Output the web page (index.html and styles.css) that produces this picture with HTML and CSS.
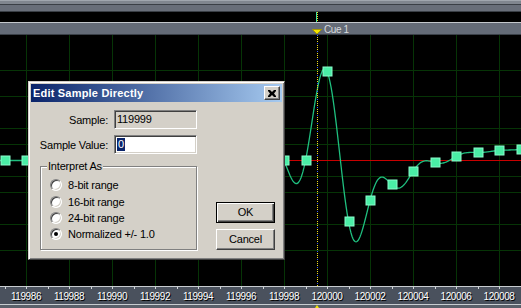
FILE: index.html
```html
<!DOCTYPE html>
<html lang="en">
<head>
    <meta charset="UTF-8">
    <meta name="viewport" content="width=device-width, initial-scale=1.0">
    <title>Edit Sample Directly</title>
    <link rel="stylesheet" href="styles.css">
</head>
<body>

<div class="editor">
    <div class="topbar"></div>
    <div class="overview">
        <div class="playhead"></div>
    </div>
    <div class="cuebar">
        <div class="cue">
            <svg class="cue-flag" width="10" height="6" viewBox="0 0 10 6">
                <polygon points="0.5,0.5 9.5,0.5 5,5" />
            </svg>
            <span class="cue-name">Cue 1</span>
        </div>
    </div>
    <div class="wave">
        <svg id="wave" width="521" height="251" viewBox="0 0 521 251"></svg>
    </div>
    <div class="ruler">
        <span>119986</span>
        <span>119988</span>
        <span>119990</span>
        <span>119992</span>
        <span>119994</span>
        <span>119996</span>
        <span>119998</span>
        <span>120000</span>
        <span>120002</span>
        <span>120004</span>
        <span>120006</span>
        <span>120008</span>
    </div>
    <div class="footer">
        <div class="cursor-mark"></div>
    </div>
</div>

<div class="dialog">
    <div class="titlebar">
        <span>Edit Sample Directly</span>
        <button class="close">
            <svg width="8" height="7" viewBox="0 0 8 7">
                <path d="M0 0h2l2 2 2-2h2v1l-2 2.5 2 2.5v1h-2l-2-2-2 2h-2v-1l2-2.5-2-2.5z" />
            </svg>
        </button>
    </div>
    <div class="dlg-body">
        <div class="left">
            <div class="row">
                <label>Sample:</label>
                <div class="field readonly">119999</div>
            </div>
            <div class="row">
                <label>Sample Value:</label>
                <div class="field"><span class="selected">0</span></div>
            </div>
            <fieldset class="group">
                <legend>Interpret As</legend>
                <div class="option"><span class="radio"></span>8-bit range</div>
                <div class="option"><span class="radio"></span>16-bit range</div>
                <div class="option"><span class="radio"></span>24-bit range</div>
                <div class="option"><span class="radio checked"></span>Normalized +/- 1.0</div>
            </fieldset>
        </div>
        <div class="actions">
            <button class="btn default">OK</button>
            <button class="btn">Cancel</button>
        </div>
    </div>
</div>

<script>
    const svg = document.getElementById('wave');
    const NS = 'http://www.w3.org/2000/svg';
    const MID = 125;     // zero line
    const STEP = 21.5;   // pixels per sample
    const X0 = 327;      // sample 120000

    function add(tag, attrs) {
        const el = document.createElementNS(NS, tag);
        for (const k in attrs) el.setAttribute(k, attrs[k]);
        svg.appendChild(el);
        return el;
    }

    // grid
    for (let i = 0; i < 12; i++) {
        const x = 26.5 + 43 * i;
        add('line', { x1: x, y1: 0, x2: x, y2: 251, class: 'grid' });
    }
    [-90, -64, -32, -16, 16, 32, 64, 90].forEach(function (d) {
        const y = MID + d + 0.5;
        add('line', { x1: 0, y1: y, x2: 521, y2: y, class: 'grid' });
    });
    add('line', { x1: 0, y1: MID + 0.5, x2: 521, y2: MID + 0.5, class: 'zero' });

    // sample values, up is positive
    const samples = { 0: 89, 1: -61, 2: -40, 3: -24, 4: -11, 5: -2, 6: 4, 7: 8, 8: 10, 9: 11 };

    function sample(k) {
        if (k < 0) return 0;
        if (k in samples) return samples[k];
        return 12;
    }

    function lanczos(x, a) {
        if (x === 0) return 1;
        if (Math.abs(x) >= a) return 0;
        const px = Math.PI * x;
        return a * Math.sin(px) * Math.sin(px / a) / (px * px);
    }

    function level(t) {
        let s = 0;
        const k0 = Math.floor(t);
        for (let k = k0 - 7; k <= k0 + 8; k++) s += sample(k) * lanczos(t - k, 8);
        return s;
    }

    let pts = [];
    for (let x = 0; x <= 521; x++) {
        const y = MID + 0.5 - level((x - X0) / STEP);
        pts.push(x + ',' + y.toFixed(2));
    }
    add('polyline', { points: pts.join(' '), class: 'curve' });

    // cue / cursor line
    add('line', { x1: 317.5, y1: 0, x2: 317.5, y2: 251, class: 'cue-line' });
    add('line', { x1: 317.5, y1: 0, x2: 317.5, y2: 251, class: 'cue-line blue' });

    for (let k = -15; k <= 9; k++) {
        const x = Math.round(X0 + STEP * k);
        const y = MID - sample(k);
        add('rect', { x: x - 4, y: y - 4, width: 9, height: 9, class: 'dot' });
    }
</script>

</body>
</html>
```

FILE: styles.css
```css
body {
    margin: 0;
    padding: 0;
    width: 521px;
    height: 308px;
    overflow: hidden;
    position: relative;
    background-color: #000;
    font-family: "Liberation Sans", Arial, sans-serif;
    font-size: 11px;
}

.topbar {
    height: 12px;
    background: linear-gradient(#a0a6ae 0 1px, #80868f 1px 4px, #3a3f46 4px 5px, #686e79 5px 11px, #3a3f46 11px 12px);
}

.overview {
    height: 10px;
    position: relative;
}

.playhead {
    position: absolute;
    left: 316px;
    top: 0;
    width: 1px;
    height: 10px;
    background-color: #3fe0a0;
}

.playhead::after {
    content: "";
    position: absolute;
    left: 1px;
    top: 0;
    width: 1px;
    height: 10px;
    background: repeating-linear-gradient(#f0e020 0 1px, transparent 1px 2px);
}

.cuebar {
    height: 11px;
    border-top: 1px solid #c4c8cc;
    border-bottom: 1px solid #3a4048;
    background-color: #646b77;
    position: relative;
}

.cue {
    position: absolute;
    left: 312px;
    top: 0;
    display: flex;
    align-items: flex-start;
}

.cue-flag {
    display: block;
    margin-top: 6px;
}

.cue-flag polygon {
    fill: #f4e400;
    stroke: #a89a00;
    stroke-width: 1;
}

.cue-name {
    color: #d6dade;
    font-size: 10px;
    letter-spacing: -0.4px;
    line-height: 11px;
    margin-top: 1px;
    margin-left: 2px;
}

.wave {
    height: 251px;
}

.wave svg {
    display: block;
}

.grid {
    stroke: #063406;
    stroke-width: 1;
}

.zero {
    stroke: #c80000;
    stroke-width: 1;
}

.curve {
    fill: none;
    stroke: #1fbf7f;
    stroke-width: 1.3;
}

.cue-line {
    stroke: #f0e020;
    stroke-width: 1;
    stroke-dasharray: 1 1;
}

.cue-line.blue {
    stroke: #4060ff;
    stroke-dasharray: 1 7;
}

.dot {
    fill: #4aeea6;
    stroke: #8cfccc;
    stroke-width: 1;
}

.ruler {
    height: 17px;
    display: flex;
    padding-left: 4.5px;
    border-top: 1px solid #c8ccd0;
    border-bottom: 1px solid #c8ccd0;
    background-color: #4a515d;
    background-image: linear-gradient(to right, #d0d4d8 0 1px, transparent 1px 21px, #d0d4d8 21px 22px, transparent 22px);
    background-size: 43px 2px;
    background-position: 5px 0;
    background-repeat: repeat-x;
}

.ruler span {
    flex: 0 0 43px;
    text-align: center;
    color: #fff;
    font-size: 10px;
    letter-spacing: -0.4px;
    line-height: 10px;
    padding-top: 5px;
    text-shadow: 1px 1px 0 #000;
}

.footer {
    height: 3px;
    background-color: #5a606a;
    position: relative;
}

.cursor-mark {
    position: absolute;
    left: 315px;
    top: 0;
    width: 0;
    height: 0;
    border-left: 2.5px solid transparent;
    border-right: 2.5px solid transparent;
    border-bottom: 3px solid #f4e400;
}

/* dialog */

.dialog {
    position: absolute;
    left: 28px;
    top: 81px;
    width: 257px;
    height: 179px;
    box-sizing: border-box;
    padding: 2px;
    background-color: #d4d0c8;
    border: 1px solid;
    border-color: #d4d0c8 #404040 #404040 #d4d0c8;
    box-shadow: inset 1px 1px 0 #fff, inset -1px -1px 0 #808080;
    color: #000;
    letter-spacing: -0.2px;
}

.titlebar {
    height: 18px;
    display: flex;
    align-items: center;
    justify-content: space-between;
    padding: 0 2px;
    background: linear-gradient(to right, #0a246a, #a6caf0);
    color: #fff;
    font-weight: bold;
    letter-spacing: 0.2px;
}

.close {
    width: 16px;
    height: 14px;
    padding: 0;
    display: flex;
    align-items: center;
    justify-content: center;
    background-color: #d4d0c8;
    border: 1px solid;
    border-color: #fff #404040 #404040 #fff;
    box-shadow: inset -1px -1px 0 #808080;
}

.close svg {
    display: block;
}

.close path {
    fill: #000;
}

.dlg-body {
    display: flex;
    align-items: flex-end;
    padding-top: 8px;
}

.left {
    width: 166px;
}

.row {
    display: flex;
    align-items: center;
    gap: 6px;
    margin-bottom: 6px;
}

.row label {
    width: 77px;
    text-align: right;
}

.field {
    width: 83px;
    height: 19px;
    box-sizing: border-box;
    padding: 0 2px;
    line-height: 17px;
    background-color: #fff;
    border: 1px solid;
    border-color: #808080 #fff #fff #808080;
    box-shadow: inset 1px 1px 0 #404040, inset -1px -1px 0 #d4d0c8;
}

.field.readonly {
    background-color: #d4d0c8;
}

.selected {
    display: inline-block;
    padding: 0 1px;
    line-height: 13px;
    background-color: #0a246a;
    color: #fff;
}

.group {
    margin: 4px 0 0 9px;
    padding: 4px 0 6px 9px;
    width: 157px;
    box-sizing: border-box;
    border: 1px solid #808080;
    box-shadow: inset 1px 1px 0 #fff, 1px 1px 0 #fff;
}

.group legend {
    margin-left: -3px;
    padding: 0 1px;
    line-height: 13px;
    background-color: #d4d0c8;
}

.option {
    display: flex;
    align-items: center;
    gap: 6px;
    height: 16.4px;
}

.radio {
    width: 12px;
    height: 12px;
    box-sizing: border-box;
    border-radius: 50%;
    background-color: #fff;
    border: 1px solid;
    border-color: #808080 #fff #fff #808080;
    box-shadow: inset 1px 1px 0 #404040, inset -1px -1px 0 #d4d0c8;
    position: relative;
}

.radio.checked::after {
    content: "";
    position: absolute;
    left: 3px;
    top: 3px;
    width: 4px;
    height: 4px;
    border-radius: 50%;
    background-color: #000;
}

.actions {
    display: flex;
    flex-direction: column;
    gap: 6px;
    margin-left: 19px;
}

.btn {
    width: 59px;
    height: 21px;
    padding: 0;
    font-family: "Liberation Sans", Arial, sans-serif;
    font-size: 11px;
    letter-spacing: -0.2px;
    color: #000;
    background-color: #d4d0c8;
    border: 1px solid;
    border-color: #fff #404040 #404040 #fff;
    box-shadow: inset -1px -1px 0 #808080;
}

.btn.default {
    border-color: #000;
    box-shadow: inset 1px 1px 0 #fff, inset -1px -1px 0 #404040, inset -2px -2px 0 #808080;
}
```
